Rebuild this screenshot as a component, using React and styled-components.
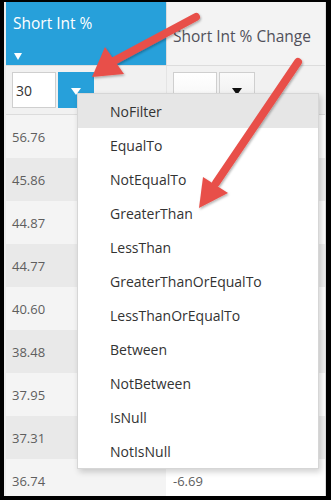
import React from "react";
import styled, { createGlobalStyle } from "styled-components";

const Global = createGlobalStyle`
  html, body { margin: 0; padding: 0; background: #000; }
  body { font-family: "Open Sans", "Noto Sans", sans-serif; }
  * { box-sizing: border-box; }
`;

const Frame = styled.div`
  position: relative;
  width: 331px;
  height: 500px;
  border-style: solid;
  border-color: #000;
  border-width: 2px 5px 4px 4px;
  background: #fff;
  overflow: hidden;
`;

const Grid = styled.div`
  display: flex;
  flex-direction: column;
  border-left: 2px solid #ececec;
  height: 100%;
`;

const Row = styled.div`
  display: grid;
  grid-template-columns: 160px 1fr;
  flex: none;
`;

const HeaderCell = styled.div`
  height: 64px;
  display: flex;
  flex-direction: column;
  justify-content: ${(p) => (p.$sorted ? "space-between" : "center")};
  padding: ${(p) => (p.$sorted ? "11px 7px 5px 7px" : "0 6px")};
  background: ${(p) => (p.$sorted ? "#27a0da" : "#f3f3f3")};
  color: ${(p) => (p.$sorted ? "#fff" : "#50505a")};
  font-size: 15.5px;
  border-left: ${(p) => (p.$sorted ? "none" : "1px solid #dcdcdc")};
  border-right: ${(p) => (p.$sorted ? "none" : "1px solid #dcdcdc")};
  border-bottom: 1px solid #dcdcdc;
  white-space: nowrap;
`;

const HeaderLabel = styled.span`
  line-height: 20px;
  padding-top: ${(p) => (p.$sorted ? "0" : "4px")};
`;

const SortArrow = styled.span`
  width: 0;
  height: 0;
  border-left: 4px solid transparent;
  border-right: 4px solid transparent;
  border-top: 7px solid #fff;
  margin-left: 1px;
`;

const FilterCell = styled.div`
  height: 49px;
  display: flex;
  align-items: flex-start;
  gap: 2px;
  padding: 6px 6px 0;
  background: #f1f1f1;
  border-bottom: 1px solid #dcdcdc;
  border-left: ${(p) => (p.$second ? "1px solid #e4e4e4" : "none")};
  border-right: ${(p) => (p.$second ? "1px solid #dcdcdc" : "none")};
`;

const FilterInput = styled.div`
  width: 44px;
  height: 36px;
  border: 1px solid #cfcfcf;
  background: ${(p) => (p.$plain ? "linear-gradient(#fff, #f4f4f4)" : "#fff")};
  font-size: 14px;
  color: #333;
  display: flex;
  align-items: center;
  padding-left: 3px;
`;

const FilterButton = styled.div`
  width: 36px;
  height: 36px;
  display: flex;
  align-items: center;
  justify-content: center;
  background: ${(p) => (p.$active ? "#27a0da" : "linear-gradient(#fafafa, #ececec)")};
  border: ${(p) => (p.$active ? "none" : "1px solid #cfcfcf")};
`;

const DownTri = styled.span`
  width: 0;
  height: 0;
  border-left: 5px solid transparent;
  border-right: 5px solid transparent;
  border-top: 7px solid ${(p) => p.$color};
  margin-top: 3px;
`;

const DataCell = styled.div`
  height: 43px;
  display: flex;
  align-items: center;
  padding-left: ${(p) => (p.$second ? "7px" : "6px")};
  font-size: 13px;
  color: #5e5e5e;
  background: ${(p) =>
    p.$second ? (p.$odd ? "#efefef" : "#ffffff") : p.$odd ? "#e9e9e9" : "#f4f4f4"};
  border-right: ${(p) => (p.$second ? "1px solid #dcdcdc" : "none")};
`;

const Menu = styled.ul`
  position: absolute;
  left: 73px;
  top: 91px;
  width: 242px;
  margin: 0;
  padding: 0;
  list-style: none;
  background: #fff;
  border: 1px solid #d6d6d6;
  box-shadow: 2px 3px 6px rgba(0, 0, 0, 0.18);
`;

const MenuItem = styled.li`
  height: 34px;
  display: flex;
  align-items: center;
  padding-left: 32px;
  font-size: 14px;
  color: #333;
  background: ${(p) => (p.$active ? "#e6e6e6" : "transparent")};
`;

const Overlay = styled.svg`
  position: absolute;
  left: -4px;
  top: -2px;
  width: 331px;
  height: 500px;
  pointer-events: none;
`;

const values = [
  ["56.76", ""],
  ["45.86", ""],
  ["44.87", ""],
  ["44.77", ""],
  ["40.60", ""],
  ["38.48", ""],
  ["37.95", ""],
  ["37.31", ""],
  ["36.74", "-6.69"],
];

const options = [
  "NoFilter",
  "EqualTo",
  "NotEqualTo",
  "GreaterThan",
  "LessThan",
  "GreaterThanOrEqualTo",
  "LessThanOrEqualTo",
  "Between",
  "NotBetween",
  "IsNull",
  "NotIsNull",
];

const RED = "#e8504a";

function Arrow({ x1, y1, x2, y2, head }) {
  return (
    <g filter="url(#shadow)">
      <line x1={x1} y1={y1} x2={x2} y2={y2} stroke={RED} strokeWidth="8" strokeLinecap="round" />
      <polygon points={head} fill={RED} />
    </g>
  );
}

export default function App() {
  return (
    <>
      <Global />
      <Frame>
        <Grid>
          <Row>
            <HeaderCell $sorted>
              <HeaderLabel $sorted>Short Int %</HeaderLabel>
              <SortArrow />
            </HeaderCell>
            <HeaderCell>
              <HeaderLabel>Short Int % Change</HeaderLabel>
            </HeaderCell>
          </Row>
          <Row>
            <FilterCell>
              <FilterInput>30</FilterInput>
              <FilterButton $active>
                <DownTri $color="#fff" />
              </FilterButton>
            </FilterCell>
            <FilterCell $second>
              <FilterInput $plain />
              <FilterButton>
                <DownTri $color="#111" />
              </FilterButton>
            </FilterCell>
          </Row>
          {values.map(([a, b], i) => (
            <Row key={a}>
              <DataCell $odd={i % 2 === 1}>{a}</DataCell>
              <DataCell $second $odd={i % 2 === 1}>{b}</DataCell>
            </Row>
          ))}
        </Grid>
        <Menu>
          {options.map((o, i) => (
            <MenuItem key={o} $active={i === 0}>{o}</MenuItem>
          ))}
        </Menu>
        <Overlay viewBox="0 0 331 500">
          <defs>
            <filter id="shadow" x="-20%" y="-20%" width="140%" height="140%">
              <feDropShadow dx="1" dy="1.5" stdDeviation="1.2" floodColor="#000" floodOpacity="0.3" />
            </filter>
          </defs>
          <Arrow x1={196} y1={17} x2={112} y2={62} head="105,47 124,74 92,77" />
          <Arrow x1={298} y1={62} x2={216} y2={183} head="203,177 228,193 199,208" />
        </Overlay>
      </Frame>
    </>
  );
}
